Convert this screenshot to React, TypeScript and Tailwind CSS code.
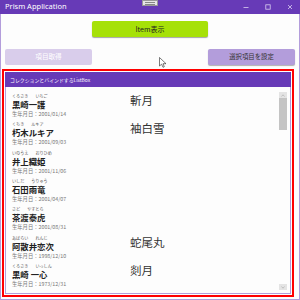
import React from "react";

const jp = { fontFamily: '"Noto Sans CJK JP", "Noto Sans", sans-serif' };

const people = [
  { kanaA: "くろさき", kanaB: "いちご", name: "黒崎一護", birth: "2001/01/14", sword: "斬月" },
  { kanaA: "くちき", kanaB: "ルキア", name: "朽木ルキア", birth: "2001/09/03", sword: "袖白雪" },
  { kanaA: "いのうえ", kanaB: "おりひめ", name: "井上織姫", birth: "2001/11/06", sword: "" },
  { kanaA: "いしだ", kanaB: "うりゅう", name: "石田雨竜", birth: "2001/04/07", sword: "" },
  { kanaA: "さど", kanaB: "やすとら", name: "茶渡泰虎", birth: "2001/08/31", sword: "" },
  { kanaA: "あばらい", kanaB: "れんじ", name: "阿散井恋次", birth: "1998/12/10", sword: "蛇尾丸" },
  { kanaA: "くろさき", kanaB: "いっしん", name: "黒崎 一心", birth: "1973/12/31", sword: "剡月" },
];

function PersonRow({ p }: { p: (typeof people)[number] }) {
  return (
    <div className="flex items-start h-[28.33px]">
      <div className="w-[118px] flex flex-col text-[#333]">
        <div className="flex gap-[7px] text-[4.1px] leading-[6px] text-[#555]">
          <span>{p.kanaA}</span>
          <span>{p.kanaB}</span>
        </div>
        <div className="text-[8.4px] leading-[11px] font-bold text-[#222]">{p.name}</div>
        <div className="text-[5.3px] leading-[8px] text-[#777]">生年月日：{p.birth}</div>
      </div>
      <div className="text-[11.5px] leading-[14px] text-[#333]">{p.sword}</div>
    </div>
  );
}

export default function App() {
  return (
    <div className="w-[300px] h-[300px] flex flex-col bg-[#fdfdfd] relative overflow-hidden" style={jp}>
      {/* Title bar */}
      <div className="h-[14px] bg-[#673ab7] flex items-center justify-between pl-[5px] pr-[7px] shrink-0">
        <span className="text-[7.5px] text-white" style={{ fontFamily: '"Noto Sans", sans-serif' }}>
          Prism Application
        </span>
        <div className="flex items-center gap-[16px]">
          <svg width="6" height="6" viewBox="0 0 6 6">
            <line x1="0.5" y1="3.5" x2="5.5" y2="3.5" stroke="#d9cdf0" strokeWidth="0.8" />
          </svg>
          <svg width="6" height="6" viewBox="0 0 6 6">
            <rect x="0.8" y="0.8" width="4.4" height="4.4" fill="none" stroke="#d9cdf0" strokeWidth="0.8" />
          </svg>
          <svg width="6" height="6" viewBox="0 0 6 6">
            <path d="M1 1 L5 5 M5 1 L1 5" stroke="#d9cdf0" strokeWidth="0.8" />
          </svg>
        </div>
      </div>
      <div className="absolute left-[142px] top-0 w-[16px] h-[6px] bg-[#e6e6e6] border border-[#9a9a9a] flex flex-col justify-center gap-[1px] px-[2px]">
        <div className="h-px bg-[#888]" />
        <div className="h-px bg-[#888]" />
      </div>

      {/* Content */}
      <div className="flex-1 flex flex-col border-x border-b border-[#b39ddb] min-h-0">
        <div className="flex justify-center pt-[7px]">
          <button className="w-[116px] h-[16px] bg-[#a6e108] rounded-[2px] shadow-[0_1px_1px_rgba(0,0,0,0.35)] text-[7px] text-[#222] flex items-center justify-center">
            Item表示
          </button>
        </div>
        <div className="flex justify-between px-[4px] mt-[12px]">
          <button className="w-[87px] h-[16px] bg-[#d9cdeb] rounded-[2px] text-[6.6px] text-white flex items-center justify-center">
            項目取得
          </button>
          <button className="w-[87px] h-[16px] bg-[#b39ddb] rounded-[2px] shadow-[0_1px_1px_rgba(0,0,0,0.3)] text-[6.4px] text-[#333] flex items-center justify-center">
            選択項目を設定
          </button>
        </div>

        {/* Highlighted ListBox */}
        <div className="ml-[1px] mt-[4px] w-[292px] h-[228px] border-2 border-[#ff0000] p-px flex flex-col">
          <div className="h-[15px] bg-[#673ab7] flex items-center pl-[5px] text-[4.9px] text-white shrink-0">
            コレクションとバインドするListBox
          </div>
          <div className="flex-1 border-x border-b border-[#b39ddb] flex min-h-0">
            <div className="flex-1 flex flex-col pt-[6px] pl-[6px] overflow-hidden">
              {people.map((p, i) => (
                <PersonRow key={i} p={p} />
              ))}
            </div>
            <div className="w-[8px] mr-[3px] mt-[5px] mb-[3px] flex flex-col">
              <div className="h-[6px] bg-[#e4e4e4] flex items-center justify-center">
                <svg width="4" height="3" viewBox="0 0 4 3">
                  <path d="M0.5 2.5 L2 0.8 L3.5 2.5" fill="none" stroke="#aaa" strokeWidth="0.6" />
                </svg>
              </div>
              <div className="h-[32px] bg-[#c4c4c4]" />
              <div className="flex-1" />
              <div className="h-[6px] bg-[#e4e4e4] flex items-center justify-center">
                <svg width="4" height="3" viewBox="0 0 4 3">
                  <path d="M0.5 0.5 L2 2.2 L3.5 0.5" fill="none" stroke="#aaa" strokeWidth="0.6" />
                </svg>
              </div>
            </div>
          </div>
        </div>
      </div>

      {/* mouse cursor */}
      <svg className="absolute left-[159px] top-[57px]" width="8" height="11" viewBox="0 0 8 11">
        <path d="M0.5 0.5 L0.5 9 L2.6 7.2 L4 10.3 L5.3 9.7 L4 6.7 L7 6.7 Z" fill="#fff" stroke="#222" strokeWidth="0.6" />
      </svg>
    </div>
  );
}
